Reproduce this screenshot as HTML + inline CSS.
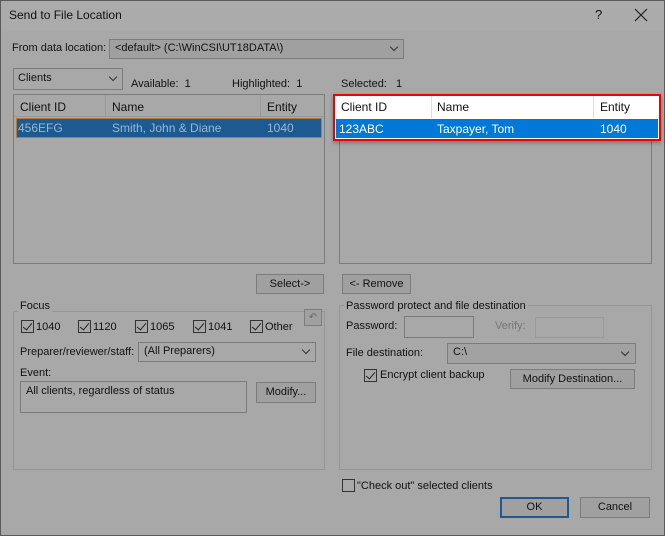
<!DOCTYPE html>
<html><head><style>
*{box-sizing:border-box;margin:0;padding:0}
body{width:665px;height:536px;background:#a8a8a8;font-family:"Liberation Sans",sans-serif;font-size:11px;color:#111;position:relative;overflow:hidden}
.a{position:absolute;white-space:nowrap}
.win{position:absolute;left:0;top:0;width:665px;height:536px;border:1px solid #5a5a5a;background:#a8a8a8}
.tb{position:absolute;left:1px;top:1px;width:663px;height:29px;background:#ababab}
.box{position:absolute;border:1px solid #7c7c7c;background:#a8a8a8}
.btn{position:absolute;border:1px solid #7c7c7c;background:#a0a0a0;text-align:center;line-height:18px}
.grp{position:absolute;border:1px solid #969696}
.cb{position:absolute;width:13px;height:13px;border:1px solid #333;background:#a8a8a8}
.cb.c::after{content:"";position:absolute;left:3px;top:0px;width:4px;height:8px;border:solid #222;border-width:0 1.5px 1.5px 0;transform:rotate(40deg)}
.chev{position:absolute;width:6px;height:6px;border:solid #333;border-width:0 1px 1px 0;transform:rotate(45deg)}
</style></head><body>
<div class="win"></div>
<div class="tb"></div>
<div class="a" style="left:9px;top:8px;font-size:12px">Send to File Location</div>
<div class="a" style="left:595px;top:7px;font-size:13px">?</div>
<svg class="a" style="left:634px;top:8px" width="14" height="14"><path d="M1 1L13 13M13 1L1 13" stroke="#222" stroke-width="1.2"/></svg>

<div class="a" style="left:12px;top:42px">From data location:</div>
<div class="box" style="left:109px;top:39px;width:295px;height:20px;background:#a0a0a0"></div>
<div class="a" style="left:115px;top:42px">&lt;default&gt; (C:\WinCSI\UT18DATA\)</div>
<div class="chev" style="left:391px;top:44px"></div>

<div class="box" style="left:13px;top:68px;width:110px;height:22px"></div>
<div class="a" style="left:18px;top:72px">Clients</div>
<div class="chev" style="left:110px;top:74px"></div>
<div class="a" style="left:131px;top:78px">Available:&nbsp;&nbsp;1</div>
<div class="a" style="left:232px;top:78px">Highlighted:&nbsp;&nbsp;1</div>
<div class="a" style="left:341px;top:78px">Selected:&nbsp;&nbsp;&nbsp;1</div>

<div class="box" style="left:13px;top:94px;width:312px;height:170px"></div>
<div class="a" style="left:14px;top:95px;width:310px;height:22px;border-bottom:1px solid #999"></div>
<div class="a" style="left:105px;top:95px;height:22px;border-left:1px solid #999"></div>
<div class="a" style="left:260px;top:95px;height:22px;border-left:1px solid #999"></div>
<div class="a" style="left:20px;top:100px;font-size:12px">Client ID</div>
<div class="a" style="left:112px;top:100px;font-size:12px">Name</div>
<div class="a" style="left:267px;top:100px;font-size:12px">Entity</div>
<div class="a" style="left:16px;top:118px;width:306px;height:20px;background:#1c5a91;border:1px solid #b07a3c"></div>
<div class="a" style="left:18px;top:121px;font-size:12px;color:#9ab8d2">456EFG</div>
<div class="a" style="left:112px;top:121px;font-size:12px;color:#9ab8d2">Smith, John &amp; Diane</div>
<div class="a" style="left:267px;top:121px;font-size:12px;color:#9ab8d2">1040</div>

<div class="box" style="left:339px;top:94px;width:313px;height:170px"></div>
<div class="a" style="left:333px;top:94px;width:328px;height:47px;border:2px solid #e00;background:#fff;box-shadow:0 2px 4px rgba(0,0,0,.3)"></div>
<div class="a" style="left:431px;top:96px;height:22px;border-left:1px solid #ddd"></div>
<div class="a" style="left:593px;top:96px;height:22px;border-left:1px solid #ddd"></div>
<div class="a" style="left:341px;top:100px;font-size:12px">Client ID</div>
<div class="a" style="left:437px;top:100px;font-size:12px">Name</div>
<div class="a" style="left:600px;top:100px;font-size:12px">Entity</div>
<div class="a" style="left:336px;top:119px;width:322px;height:19px;background:#0078d7"></div>
<div class="a" style="left:339px;top:122px;font-size:12px;color:#fff">123ABC</div>
<div class="a" style="left:437px;top:122px;font-size:12px;color:#fff">Taxpayer, Tom</div>
<div class="a" style="left:600px;top:122px;font-size:12px;color:#fff">1040</div>

<div class="btn" style="left:256px;top:274px;width:68px;height:20px">Select-&gt;</div>
<div class="btn" style="left:342px;top:274px;width:69px;height:20px">&lt;- Remove</div>

<div class="grp" style="left:13px;top:311px;width:312px;height:159px"></div>
<div class="a" style="left:18px;top:300px;background:#a8a8a8;padding:0 2px">Focus</div>
<div class="btn" style="left:304px;top:309px;width:18px;height:17px;line-height:15px;font-size:10px;color:#666">↶</div>
<div class="cb c" style="left:21px;top:320px"></div><div class="a" style="left:36px;top:321px">1040</div>
<div class="cb c" style="left:78px;top:320px"></div><div class="a" style="left:93px;top:321px">1120</div>
<div class="cb c" style="left:135px;top:320px"></div><div class="a" style="left:150px;top:321px">1065</div>
<div class="cb c" style="left:193px;top:320px"></div><div class="a" style="left:208px;top:321px">1041</div>
<div class="cb c" style="left:250px;top:320px"></div><div class="a" style="left:265px;top:321px">Other</div>
<div class="a" style="left:20px;top:346px">Preparer/reviewer/staff:</div>
<div class="box" style="left:138px;top:342px;width:178px;height:20px"></div>
<div class="a" style="left:144px;top:345px">(All Preparers)</div>
<div class="chev" style="left:303px;top:347px"></div>
<div class="a" style="left:20px;top:367px">Event:</div>
<div class="box" style="left:20px;top:381px;width:227px;height:32px"></div>
<div class="a" style="left:26px;top:385px">All clients, regardless of status</div>
<div class="btn" style="left:256px;top:382px;width:60px;height:21px">Modify...</div>

<div class="grp" style="left:339px;top:305px;width:313px;height:165px"></div>
<div class="a" style="left:344px;top:300px;background:#a8a8a8;padding:0 2px">Password protect and file destination</div>
<div class="a" style="left:346px;top:320px">Password:</div>
<div class="box" style="left:404px;top:316px;width:70px;height:22px"></div>
<div class="a" style="left:495px;top:320px;color:#777">Verify:</div>
<div class="box" style="left:535px;top:317px;width:69px;height:21px;border-color:#999"></div>
<div class="a" style="left:346px;top:347px">File destination:</div>
<div class="box" style="left:447px;top:343px;width:189px;height:21px;background:#a2a2a2"></div>
<div class="a" style="left:453px;top:346px">C:\</div>
<div class="chev" style="left:622px;top:349px"></div>
<div class="cb c" style="left:364px;top:369px"></div>
<div class="a" style="left:380px;top:369px">Encrypt client backup</div>
<div class="btn" style="left:510px;top:369px;width:125px;height:20px">Modify Destination...</div>

<div class="cb" style="left:342px;top:479px"></div>
<div class="a" style="left:357px;top:480px">"Check out" selected clients</div>
<div class="btn" style="left:500px;top:497px;width:69px;height:21px;border:2px solid #1c5a91;line-height:17px">OK</div>
<div class="btn" style="left:580px;top:497px;width:70px;height:21px">Cancel</div>
</body></html>
